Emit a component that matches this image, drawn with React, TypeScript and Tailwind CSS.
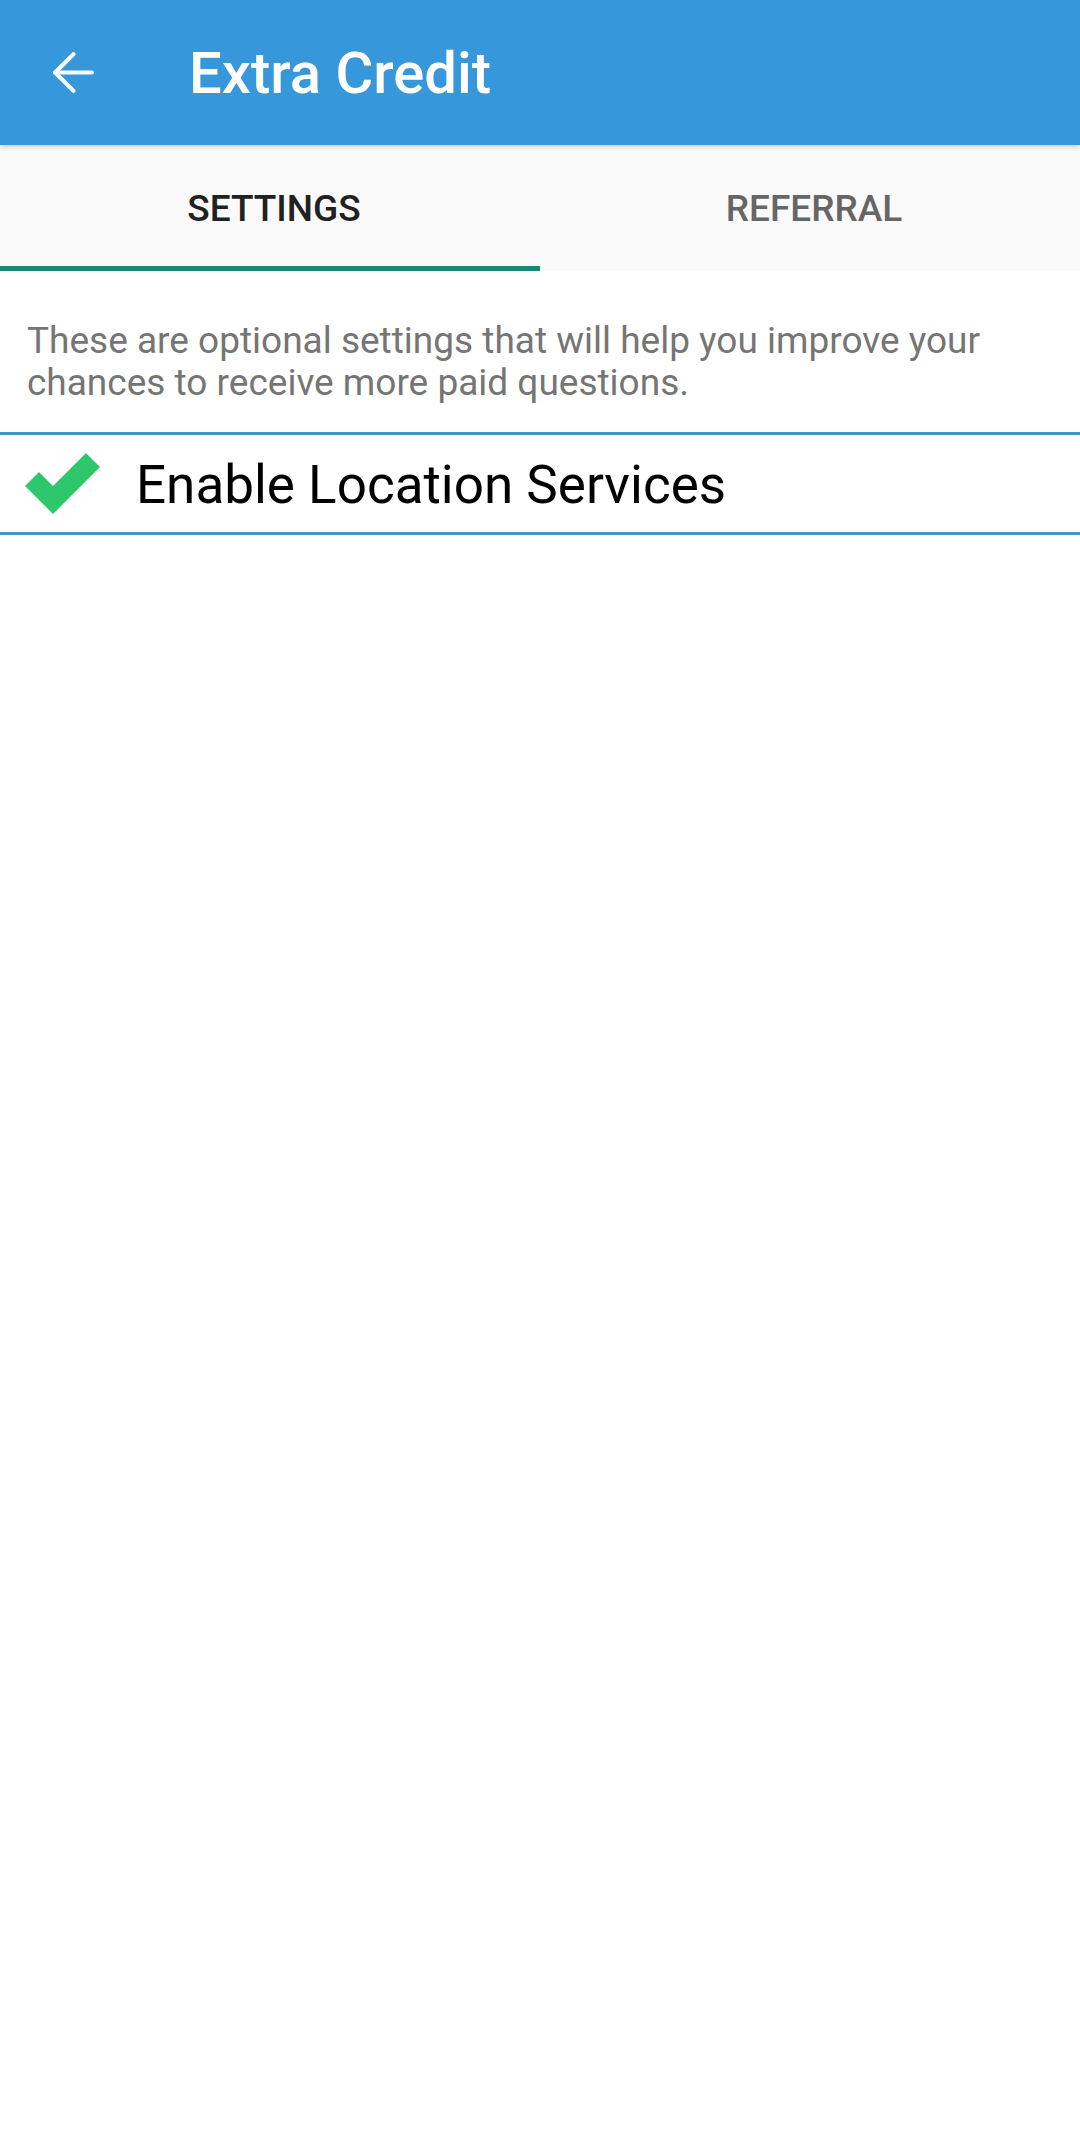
import { ArrowLeft } from "lucide-react";

const tabs = [
  { label: "SETTINGS", active: true },
  { label: "REFERRAL", active: false },
];

function CheckMark() {
  return (
    <svg viewBox="0 0 75 61" className="h-[61px] w-[75px] shrink-0">
      <polygon
        points="0,33 14,19 28,33 61,0 75,14 28,61"
        fill="#2fc76c"
      />
    </svg>
  );
}

export default function App() {
  return (
    <div
      className="flex min-h-[2133px] w-[1080px] flex-col bg-white"
      style={{ fontFamily: "Roboto, 'Noto Sans', sans-serif" }}
    >
      <header className="relative z-10 flex h-[145px] items-center bg-[#3698db] shadow-[0_2px_5px_rgba(0,0,0,0.18)]">
        <div className="flex w-[189px] shrink-0 items-center pl-[42px]">
          <ArrowLeft className="h-[63px] w-[63px] text-white" strokeWidth={1.6} />
        </div>
        <h1 className="text-[58px] font-medium leading-none text-white">
          Extra Credit
        </h1>
      </header>

      <nav className="flex h-[126px] bg-[#fafafa]">
        {tabs.map((tab) => (
          <div
            key={tab.label}
            className={
              tab.active
                ? "flex flex-1 items-center justify-center border-b-[5px] border-[#1a8776] pl-[8px] pt-[6px] text-[37px] font-medium text-[#212121]"
                : "flex flex-1 items-center justify-center border-b-[5px] border-transparent pl-[8px] pt-[6px] text-[37px] font-medium text-[#666666]"
            }
          >
            {tab.label}
          </div>
        ))}
      </nav>

      <p className="px-[27px] pb-[28px] pt-[49px] text-[37px] leading-[42px] text-[#757575]">
        These are optional settings that will help you improve your chances to
        receive more paid questions.
      </p>

      <div className="flex h-[103px] items-center gap-[36px] border-y-[3px] border-[#4793c6] pl-[25px]">
        <CheckMark />
        <span className="mt-[4px] text-[53px] leading-none text-black">
          Enable Location Services
        </span>
      </div>
    </div>
  );
}
